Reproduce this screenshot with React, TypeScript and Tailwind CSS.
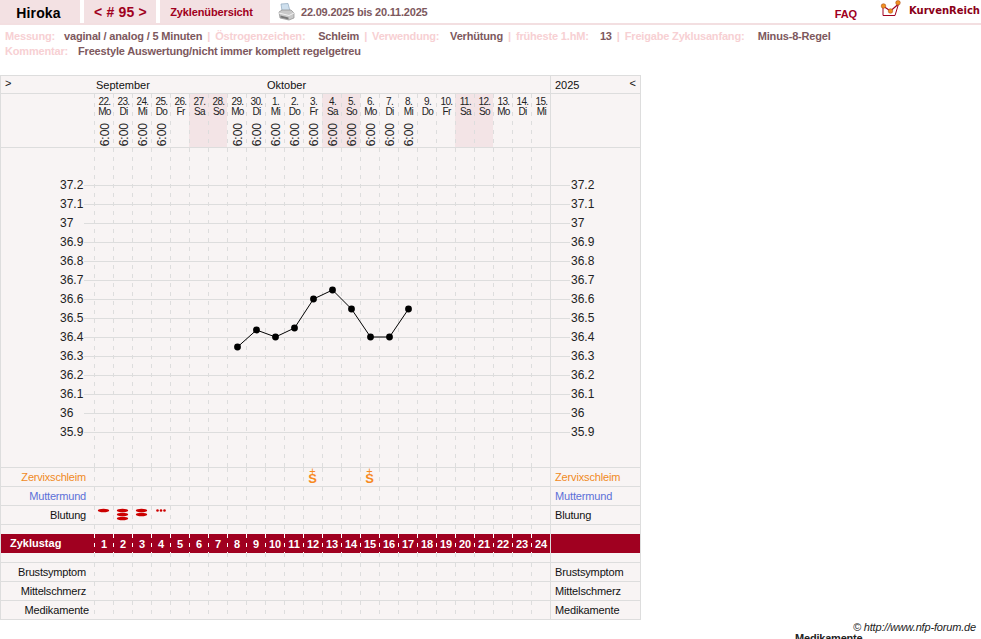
import React from "react";

const dash = "bg-[repeating-linear-gradient(to_bottom,#dddddd_0_4px,transparent_4px_9px)] bg-no-repeat bg-[length:1px_100%]";
const sans = "font-['Liberation_Sans',Arial,sans-serif]";

const days: [string, string, boolean, boolean][] = [
  ["22.", "Mo", true, false], ["23.", "Di", true, false], ["24.", "Mi", true, false], ["25.", "Do", true, false],
  ["26.", "Fr", false, false], ["27.", "Sa", false, true], ["28.", "So", false, true], ["29.", "Mo", true, false],
  ["30.", "Di", true, false], ["1.", "Mi", true, false], ["2.", "Do", true, false], ["3.", "Fr", true, false],
  ["4.", "Sa", true, true], ["5.", "So", true, true], ["6.", "Mo", true, false], ["7.", "Di", true, false],
  ["8.", "Mi", true, false], ["9.", "Do", false, false], ["10.", "Fr", false, false], ["11.", "Sa", false, true],
  ["12.", "So", false, true], ["13.", "Mo", false, false], ["14.", "Di", false, false], ["15.", "Mi", false, false],
];

const temps = ["37.2", "37.1", "37", "36.9", "36.8", "36.7", "36.6", "36.5", "36.4", "36.3", "36.2", "36.1", "36", "35.9"];
const points: [number, number][] = [[237.5, 347], [256.5, 330], [275.5, 337], [294.5, 328], [313.5, 299], [332.5, 290], [351.5, 309], [370.5, 337], [389.5, 337], [408.5, 309]];

function Cells({ red, render }: { red?: boolean; render?: (i: number) => React.ReactNode }) {
  return (
    <div className="flex w-[456px] h-full">
      {days.map((_, i) => (
        <div
          key={i}
          className={
            "w-[19px] h-full relative flex items-center justify-center " +
            (red
              ? "bg-[repeating-linear-gradient(to_bottom,#ffffff_0_4px,transparent_4px_9px)] bg-no-repeat bg-[length:1px_100%]"
              : dash)
          }
        >
          {render ? render(i) : null}
        </div>
      ))}
    </div>
  );
}

function Row({ label, rightLabel, color, h = "h-[19px]", pr = "pr-[8px]", render }: { label?: string; rightLabel?: string; color?: string; h?: string; pr?: string; render?: (i: number) => React.ReactNode }) {
  return (
    <div className={"flex border-b border-[#dddddd] " + h}>
      <div className={"w-[93px] text-right text-[11px] tracking-[-0.2px] leading-[18px] whitespace-nowrap " + pr + " " + (color ?? "text-[#111111]")}>{label}</div>
      <Cells render={render} />
      <div className={"w-[90px] border-l border-[#dddddd] pl-[4px] text-[11px] tracking-[-0.15px] leading-[18px] whitespace-nowrap " + (color ?? "text-[#111111]")}>{rightLabel ?? label}</div>
    </div>
  );
}

function Bleed({ n, dots }: { n: number; dots?: boolean }) {
  return (
    <svg width="19" height="14" viewBox="0 0 19 14" className="absolute left-0 top-[2px]">
      {dots
        ? [6.5, 10, 13.5].map((x) => <circle key={x} cx={x} cy="2.5" r="1.3" fill="#cc0000" />)
        : Array.from({ length: n }).map((_, k) => (
            <ellipse key={k} cx="9.5" cy={2.5 + k * 4} rx="5.7" ry="1.7" fill="#cc0000" />
          ))}
    </svg>
  );
}

function Printer() {
  return (
    <svg width="17" height="18" viewBox="0 0 17 18" className="shrink-0">
      <path d="M3 1 L10 0.5 L12 8 L4 8 Z" fill="#cfe0ee" stroke="#8fa8bd" strokeWidth="0.7" />
      <path d="M1 9 L4 7 L13 7 L16 10 L16 15 L11 17 L2 15 Z" fill="#c9c9c9" stroke="#8c8c8c" strokeWidth="0.7" />
      <path d="M1 10 L11 12.5 L16 10" fill="none" stroke="#f2f2f2" strokeWidth="1" />
      <path d="M2.5 12.5 L10.5 14.5 L10.5 16.5 L2.5 14.5 Z" fill="#777777" />
    </svg>
  );
}

function Logo() {
  return (
    <svg width="22" height="19" viewBox="0 0 22 19" className="shrink-0">
      <path d="M3 6 L3 15.5 L15 15.5 L18.5 4" fill="none" stroke="#a00020" strokeWidth="1" />
      <path d="M3 6 L10.5 11 L18.5 4" fill="none" stroke="#a00020" strokeWidth="1.2" />
      <circle cx="3.5" cy="6" r="2.3" fill="#f09020" stroke="#a04010" strokeWidth="0.5" />
      <circle cx="10.5" cy="11" r="2.3" fill="#f09020" stroke="#a04010" strokeWidth="0.5" />
      <circle cx="18" cy="2.8" r="2.3" fill="#f09020" stroke="#a04010" strokeWidth="0.5" />
    </svg>
  );
}

const L = ({ children, w }: { children: React.ReactNode; w: string }) => <span className={"text-[#f7d0d3] " + w}>{children}</span>;
const V = ({ children }: { children: React.ReactNode }) => <span className="text-[#7d585d]">{children}</span>;
const Sep = () => <span className="text-[#f7d0d3] mx-[5px]">|</span>;

export default function App() {
  return (
    <div className={"relative w-[981px] h-[639px] overflow-hidden bg-white " + sans}>
      <header className="flex h-[25px] border-b-2 border-[#f3dfe1]">
        <div className="w-[80px] pr-[3px] bg-[#f3e1e3] text-center text-[14px] font-bold text-black leading-[26px] tracking-[0.15px]">Hiroka</div>
        <div className="w-[72px] ml-[4px] pl-[1px] bg-[#f3e1e3] text-center text-[14px] font-bold text-[#a00020] tracking-[0.2px] leading-[25px]">&lt; # 95 &gt;</div>
        <div className="w-[110px] ml-[4px] pr-[7px] bg-[#f3e1e3] text-center text-[11px] font-bold text-[#a00020] leading-[24px] tracking-[-0.13px]">Zyklenübersicht</div>
        <div className="ml-[8px] mt-[3px]"><Printer /></div>
        <div className="ml-[6px] text-[11px] font-bold text-[#7d585d] leading-[24px] tracking-[-0.2px]">22.09.2025 bis 20.11.2025</div>
        <div className="ml-auto mr-[23px] mt-[7px] text-[11px] font-bold text-[#a00020] leading-[14px] tracking-[-0.1px]">FAQ</div>
        <div className="mr-[1px] flex items-start">
          <Logo />
          <span className="ml-[7px] mt-[5px] font-['DejaVu_Sans',sans-serif] text-[10px] font-bold text-[#8a0018] leading-[12px]">KurvenReich</span>
        </div>
      </header>

      <div className="pl-[5px] pt-[4px] text-[11px] font-bold leading-[15px] whitespace-nowrap tracking-[-0.17px]">
        <div className="flex">
          <L w="w-[59px]">Messung:</L><V>vaginal / analog / 5 Minuten</V><Sep />
          <L w="w-[103px]">Östrogenzeichen:</L><V>Schleim</V><Sep />
          <L w="w-[78px]">Verwendung:</L><V>Verhütung</V><Sep />
          <L w="w-[84px]">früheste 1.hM:</L><V>13</V><Sep />
          <L w="w-[133px]">Freigabe Zyklusanfang:</L><V>Minus-8-Regel</V>
        </div>
        <div className="flex">
          <L w="w-[73px]">Kommentar:</L><V>Freestyle Auswertung/nicht immer komplett regelgetreu</V>
        </div>
      </div>

      <main className="absolute left-0 top-[75px] w-[641px] border border-[#dddddd] bg-[#f8f4f4] text-[#111111]">
        <div className="flex h-[18px] border-b border-[#dddddd] text-[11px] leading-[18px]">
          <div className="w-[93px] pl-[4px] leading-[15px]">&gt;</div>
          <div className="w-[456px] flex">
            <span className="pl-[2px] w-[173px]">September</span>
            <span>Oktober</span>
          </div>
          <div className="w-[90px] border-l border-[#dddddd] pl-[4px] pr-[4px] flex justify-between">
            <span>2025</span><span className="leading-[15px]">&lt;</span>
          </div>
        </div>

        <div className="flex h-[54px] border-b border-[#dddddd]">
          <div className="w-[93px]" />
          <div className="flex w-[456px]">
            {days.map(([d, w, time, weekend], i) => (
              <div
                key={i}
                className={"w-[19px] h-full flex flex-col items-center text-[10px] leading-[10px] tracking-[-0.6px] text-[#222222] pt-[3px] pl-[2px] " + dash + (weekend ? " bg-[#f3e4e6]" : "")}
              >
                <span>{d}</span>
                <span>{w}</span>
                {time && (
                  <span className="mt-[6px] text-[12px] tracking-normal leading-[12px] [writing-mode:vertical-rl] rotate-180">6:00</span>
                )}
              </div>
            ))}
          </div>
          <div className="w-[90px] border-l border-[#dddddd]" />
        </div>

        <div className="relative flex h-[320px] border-b border-[#dddddd]">
          <div className="w-[93px] pt-[28px] pl-[59px] text-[12px] leading-[19px] text-[#222222]">
            {temps.map((t) => <div key={t} className="h-[19px]">{t}</div>)}
          </div>
          <Cells />
          <div className="w-[90px] border-l border-[#dddddd] pt-[28px] pl-[20px] text-[12px] leading-[19px] text-[#222222]">
            {temps.map((t) => <div key={t} className="h-[19px]">{t}</div>)}
          </div>
          <svg className="absolute left-[-1px] top-0" width="641" height="319" viewBox="0 148 641 319">
            {temps.map((_, i) => (
              <line key={i} x1="84" x2="570" y1={185.5 + i * 19} y2={185.5 + i * 19} stroke="#dddddd" strokeWidth="1" />
            ))}
            <polyline points={points.map(([x, y]) => `${x},${y}`).join(" ")} fill="none" stroke="#000000" strokeWidth="1" />
            {points.map(([x, y]) => <circle key={x} cx={x} cy={y} r="3.4" fill="#000000" />)}
          </svg>
        </div>

        <Row label="Zervixschleim" color="text-[#f08a24]" render={(i) =>
          i === 11 || i === 14 ? (
            <span className="flex flex-col items-center text-[#f7891f] font-bold -mt-[2px]">
              <span className="text-[11px] leading-[6px] font-normal">+</span>
              <span className="text-[13px] leading-[10px]">S</span>
            </span>
          ) : null
        } />
        <Row label="Muttermund" color="text-[#5c70d8]" />
        <Row label="Blutung" render={(i) =>
          i === 0 ? <Bleed n={1} /> : i === 1 ? <Bleed n={3} /> : i === 2 ? <Bleed n={2} /> : i === 3 ? <Bleed n={0} dots /> : null
        } />

        <div className="flex h-[9px]">
          <div className="w-[93px]" />
          <Cells />
          <div className="w-[90px] border-l border-[#dddddd]" />
        </div>

        <div className="flex h-[19px] bg-[#a00020] text-white text-[11px] font-bold leading-[18px]">
          <div className="w-[93px] pl-[9px]">Zyklustag</div>
          <Cells red render={(i) => <span className="pl-[1px]">{i + 1}</span>} />
          <div className="w-[90px] border-l border-[#dddddd]" />
        </div>

        <div className="flex h-[10px] border-b border-[#dddddd]">
          <div className="w-[93px]" />
          <Cells />
          <div className="w-[90px] border-l border-[#dddddd]" />
        </div>

        <Row label="Brustsymptom" />
        <Row label="Mittelschmerz" />
        <div className="flex h-[18px]">
          <div className="w-[93px] pr-[5px] text-right text-[11px] tracking-[-0.15px] leading-[18px] whitespace-nowrap">Medikamente</div>
          <Cells />
          <div className="w-[90px] border-l border-[#dddddd] pl-[4px] text-[11px] tracking-[-0.15px] leading-[18px]">Medikamente</div>
        </div>
      </main>

      <div className="absolute right-[5px] top-[621px] text-[11px] italic text-[#222222] leading-[12px] tracking-[-0.17px]">© http://www.nfp-forum.de</div>
      <div className="absolute left-[795px] top-[632px] text-[11px] font-bold text-[#222222] leading-[12px] tracking-[-0.2px]">Medikamente</div>
    </div>
  );
}
